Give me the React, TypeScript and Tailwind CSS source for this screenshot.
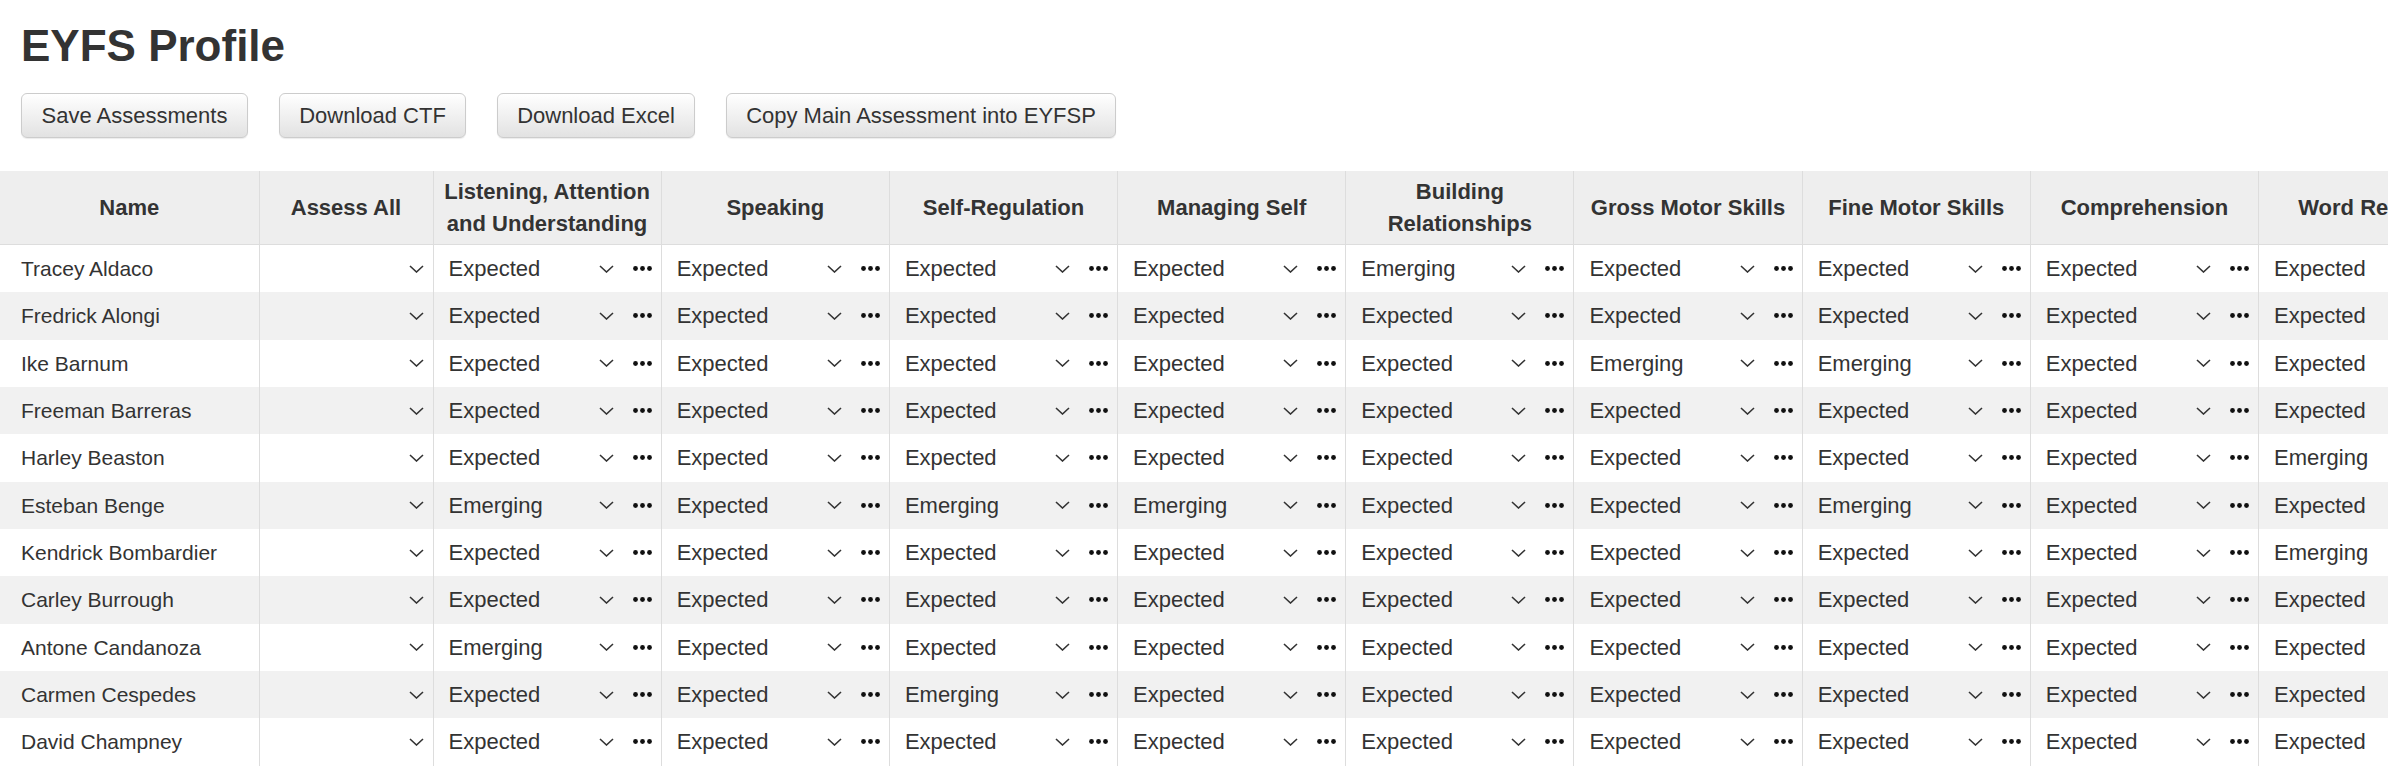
import React from 'react';

type Level = 'Expected' | 'Emerging' | '';

const columns = [
    'Listening, Attention and Understanding',
    'Speaking',
    'Self-Regulation',
    'Managing Self',
    'Building Relationships',
    'Gross Motor Skills',
    'Fine Motor Skills',
    'Comprehension',
    'Word Reading',
    'Writing',
    'Number'
];

const E: Level = 'Expected';
const M: Level = 'Emerging';

const pupils: { name: string; marks: Level[] }[] = [
    { name: 'Tracey Aldaco', marks: [E, E, E, E, M, E, E, E, E, E, E] },
    { name: 'Fredrick Alongi', marks: [E, E, E, E, E, E, E, E, E, E, E] },
    { name: 'Ike Barnum', marks: [E, E, E, E, E, M, M, E, E, E, E] },
    { name: 'Freeman Barreras', marks: [E, E, E, E, E, E, E, E, E, E, E] },
    { name: 'Harley Beaston', marks: [E, E, E, E, E, E, E, E, M, E, E] },
    { name: 'Esteban Benge', marks: [M, E, M, M, E, E, M, E, E, E, E] },
    { name: 'Kendrick Bombardier', marks: [E, E, E, E, E, E, E, E, M, E, E] },
    { name: 'Carley Burrough', marks: [E, E, E, E, E, E, E, E, E, E, E] },
    { name: 'Antone Candanoza', marks: [M, E, E, E, E, E, E, E, E, E, E] },
    { name: 'Carmen Cespedes', marks: [E, E, M, E, E, E, E, E, E, E, E] },
    { name: 'David Champney', marks: [E, E, E, E, E, E, E, E, E, E, E] },
    { name: 'Dominic Chapa', marks: [E, E, E, E, E, E, E, E, E, E, E] }
];

const Chevron = () => (
    <svg width="15" height="8" viewBox="0 0 15 8" className="shrink-0 text-[#333]">
        <path d="M1 1l6.5 6 6.5-6" fill="none" stroke="currentColor" strokeWidth="1.6" />
    </svg>
);

const Dots = () => (
    <svg width="19" height="5" viewBox="0 0 19 5" className="shrink-0 ml-[19px]">
        <circle cx="2.5" cy="2.5" r="2.4" fill="#111" />
        <circle cx="9.5" cy="2.5" r="2.4" fill="#111" />
        <circle cx="16.5" cy="2.5" r="2.4" fill="#111" />
    </svg>
);

const buttons = [
    { label: 'Save Assessments', w: 'w-[227px]' },
    { label: 'Download CTF', w: 'w-[187px]' },
    { label: 'Download Excel', w: 'w-[198px]' },
    { label: 'Copy Main Assessment into EYFSP', w: 'w-[390px]' }
];

export default function App() {
    return (
        <div className="h-screen w-full overflow-hidden bg-white text-[#333] text-[21px] font-['Liberation_Sans',Arial,sans-serif]">
            <div className="px-[21px]">
                <h1 className="pt-[21px] text-[44px] leading-[50px] font-bold">EYFS Profile</h1>
                <div className="mt-[22px] flex gap-[31px]">
                    {buttons.map(b => (
                        <button
                            key={b.label}
                            className={`${b.w} h-[45px] rounded-[6px] border border-[#ccc] bg-linear-to-b from-white to-[#e2e2e2] shadow-[0_1px_1px_rgba(0,0,0,0.08)] text-[22px] text-[#333] leading-none`}
                        >
                            {b.label}
                        </button>
                    ))}
                </div>
            </div>

            <table className="mt-[33px] w-[2943px] table-fixed border-collapse">
                <colgroup>
                    <col className="w-[259px]" />
                    <col className="w-[174px]" />
                    {columns.map(c => (
                        <col key={c} className="w-[228.2px]" />
                    ))}
                </colgroup>
                <thead>
                    <tr className="h-[73px] bg-[#eeeeee] border-b border-[#ddd] text-[22px]">
                        <th className="px-[12px] py-[5px] font-bold leading-[31.5px] text-center">Name</th>
                        <th className="px-[12px] py-[5px] font-bold leading-[31.5px] text-center border-l border-[#ddd]">Assess All</th>
                        {columns.map(c => (
                            <th key={c} className="px-[10px] py-[5px] font-bold leading-[31.5px] text-center border-l border-[#ddd]">
                                {c}
                            </th>
                        ))}
                    </tr>
                </thead>
                <tbody>
                    {pupils.map((p, i) => (
                        <tr key={p.name} className={i % 2 === 1 ? 'bg-[#f1f1f1]' : 'bg-white'}>
                            <td className="p-0">
                                <div className="h-[47.33px] flex items-center pl-[21px] whitespace-nowrap">{p.name}</div>
                            </td>
                            <td className="p-0 border-l border-[#ddd]">
                                <div className="h-[47.33px] flex items-center justify-end pr-[9px]">
                                    <Chevron />
                                </div>
                            </td>
                            {p.marks.map((m, j) => (
                                <td key={j} className="p-0 border-l border-[#ddd]">
                                    <div className="h-[47.33px] flex items-center pl-[15px] pr-[9px] text-[22px]">
                                        <span className="flex-1 whitespace-nowrap">{m}</span>
                                        <Chevron />
                                        <Dots />
                                    </div>
                                </td>
                            ))}
                        </tr>
                    ))}
                </tbody>
            </table>
        </div>
    );
}
